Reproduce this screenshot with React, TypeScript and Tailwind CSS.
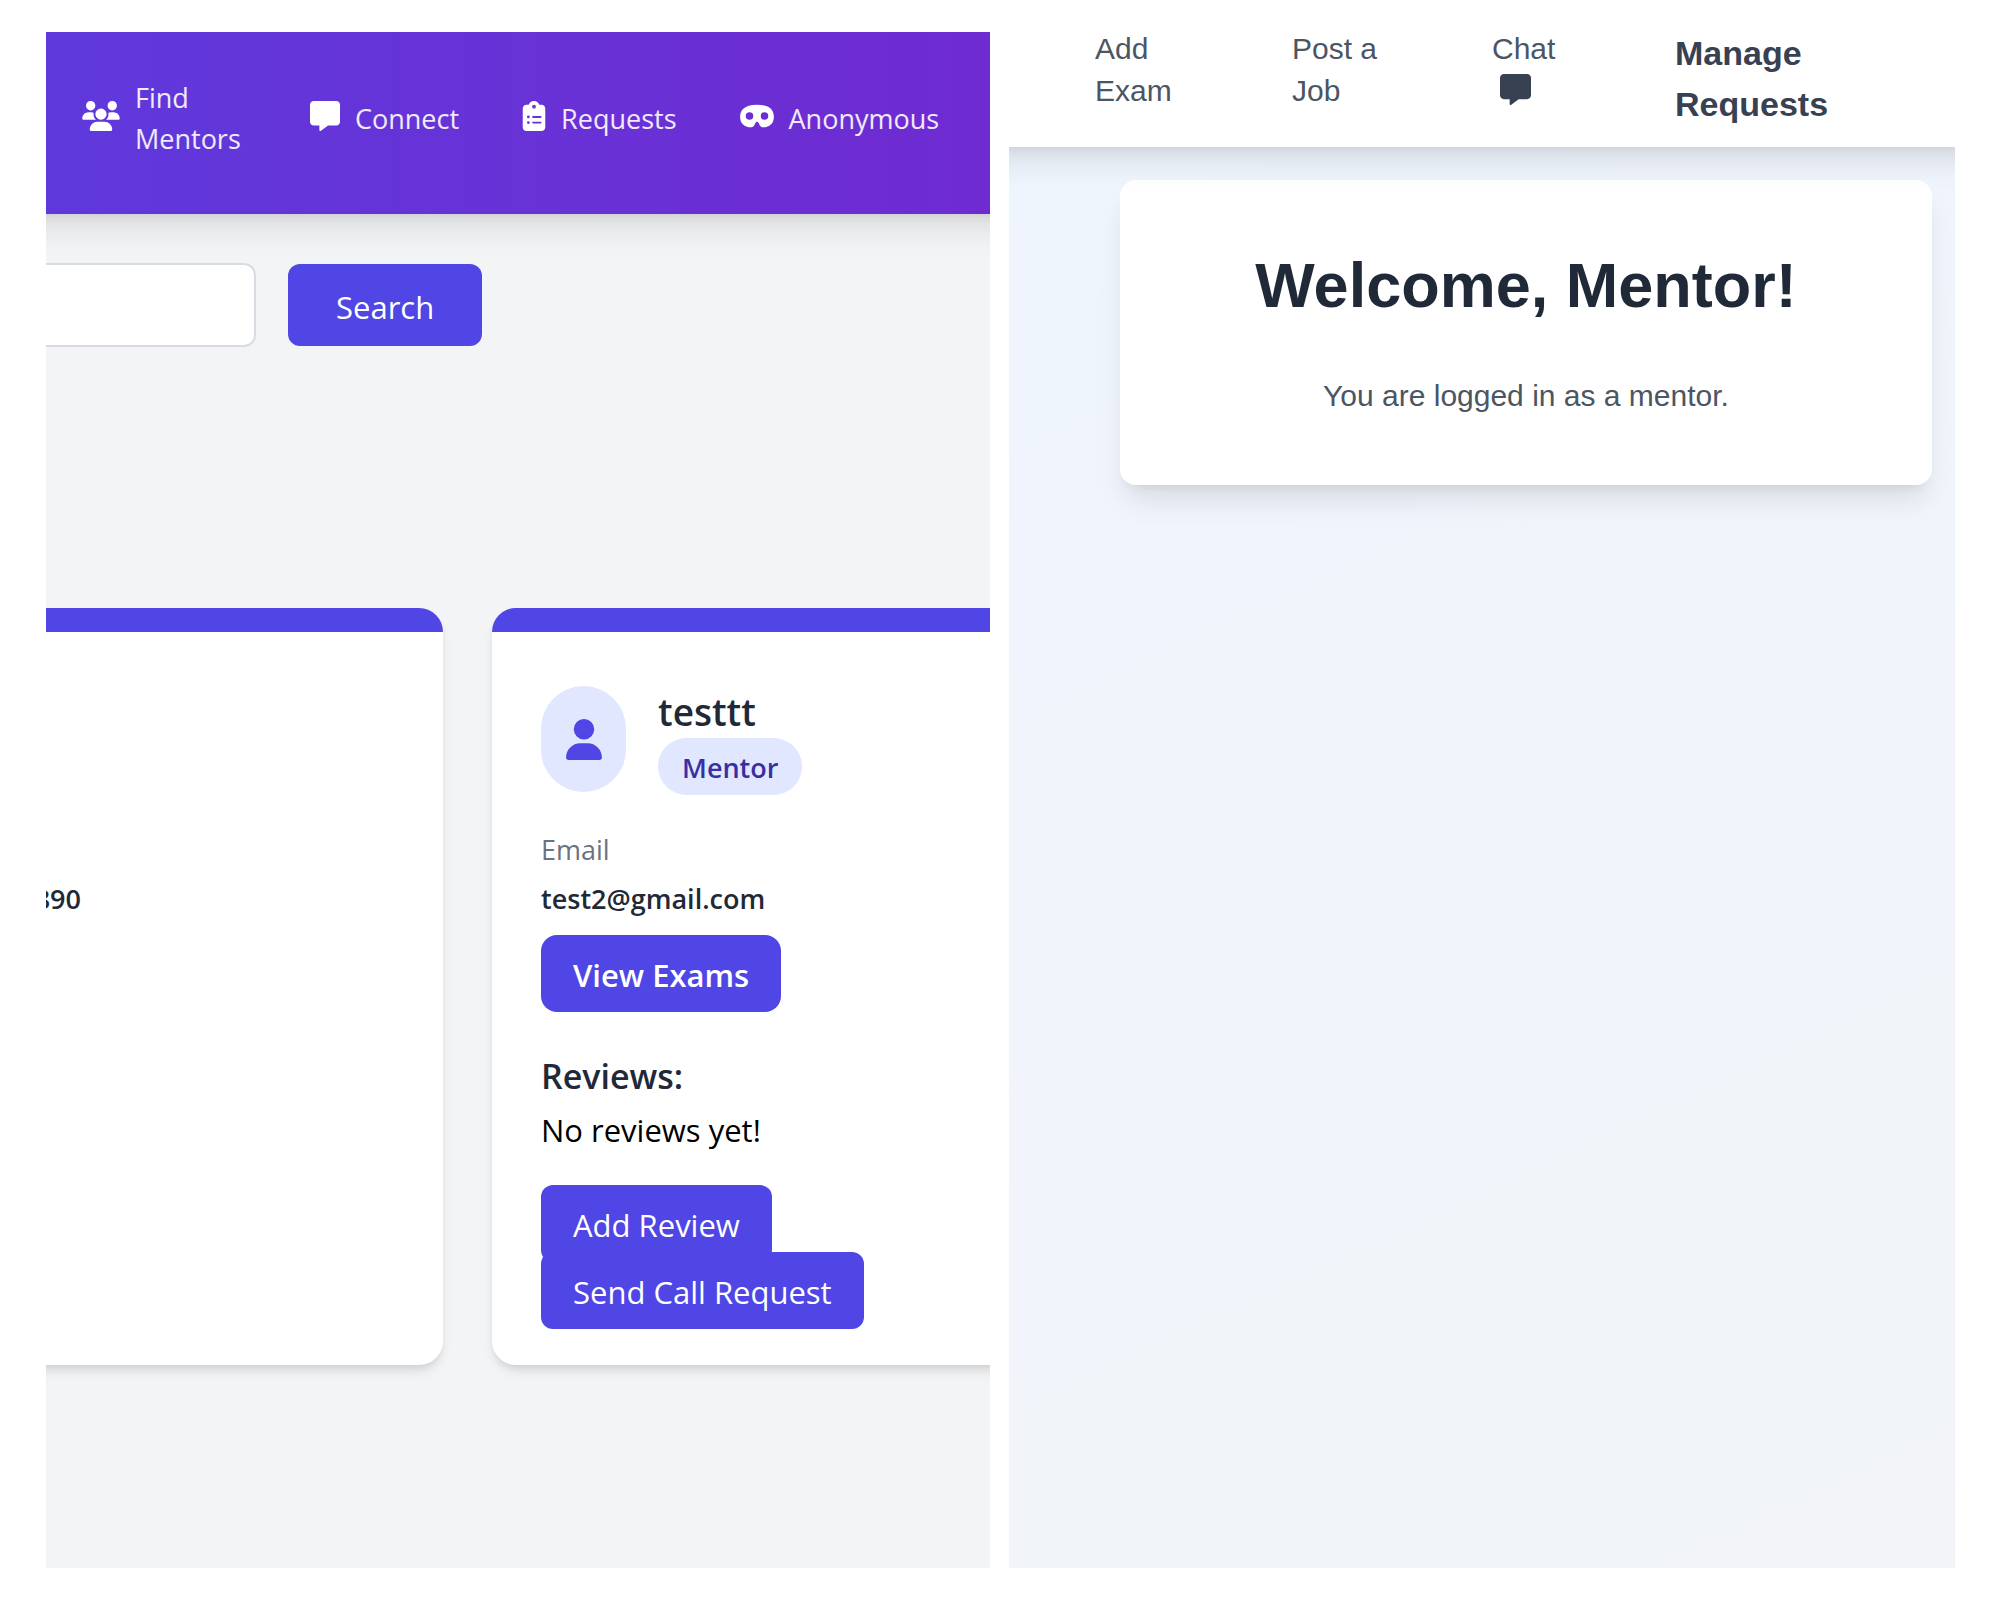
import React, { useState } from 'react';
import { FaClipboardList, FaMask, FaMessage, FaUser, FaUsers } from 'react-icons/fa6';

const navLinks = [
  { label: 'Find Mentors', icon: FaUsers, iconClass: 'w-[38px]', textClass: 'w-28' },
  { label: 'Connect', icon: FaMessage, iconClass: 'w-[30px]', textClass: '' },
  { label: 'Requests', icon: FaClipboardList, iconClass: 'w-6', textClass: '' },
  { label: 'Anonymous', icon: FaMask, iconClass: 'w-[34px]', textClass: '' },
];

const StudentHeader = () => (
  <header className="relative z-10 -mx-10 flex h-[182px] items-center bg-linear-to-r from-[#5e39dc] to-[#6f2ad1] pb-2.5 pl-[76px] shadow-[0_20px_30px_-6px_rgba(0,0,0,0.1),0_8px_12px_-8px_rgba(0,0,0,0.1)]">
    <nav className="flex items-center gap-[63px] text-[27px] leading-[41px] text-white/90">
      {navLinks.map(({ label, icon: Icon, iconClass, textClass }) => (
        <a key={label} href="#" className="flex items-center gap-[15px]">
          <span className="mb-1">
            <Icon className={`h-[30px] text-white ${iconClass}`} />
          </span>
          <span className={textClass}>{label}</span>
        </a>
      ))}
    </nav>
  </header>
);

const MentorSearch = () => {
  const [query, setQuery] = useState('');

  return (
    <form className="flex items-center gap-8" onSubmit={(e) => e.preventDefault()}>
      <input
        type="text"
        aria-label="Search mentors"
        value={query}
        onChange={(e) => setQuery(e.target.value)}
        className="h-[84px] w-[210px] rounded-r-xl border-2 border-l-0 border-[#d9dbe2] bg-white px-8 text-[31px]"
      />
      <button type="submit" className="h-[82px] rounded-xl bg-[#4f46e5] px-12 pt-1 text-[31px] text-white">
        Search
      </button>
    </form>
  );
};

const MentorCard = () => (
  <article className="rounded-l-3xl border-t-24 border-[#4f46e5] bg-white pt-[54px] pb-9 pl-[49px] shadow-[0_8px_12px_-2px_rgba(0,0,0,0.1),0_4px_8px_-4px_rgba(0,0,0,0.1)]">
    <div className="flex gap-8">
      <div className="flex h-[106px] w-[85px] items-center justify-center rounded-full bg-[#e0e7ff]">
        <FaUser className="h-[41px] w-9 text-[#4f46e5]" />
      </div>
      <div>
        <h2 className="text-[37px] leading-[52px] font-semibold text-[#1f2937]">testtt</h2>
        <span className="block w-fit rounded-full bg-[#e0e7ff] px-6 pt-[9px] pb-[7px] text-[27px] leading-[41px] font-semibold text-[#3730a3]">
          Mentor
        </span>
      </div>
    </div>
    <p className="mt-[34px] text-[27px] leading-[41px] text-[#6b7280]">Email</p>
    <p className="mt-2 text-[27px] leading-[41px] font-semibold text-[#1f2937]">test2@gmail.com</p>
    <button type="button" className="mt-4 h-[77px] rounded-2xl bg-[#4f46e5] px-8 pt-1 text-[31px] font-semibold text-white">
      View Exams
    </button>
    <h3 className="mt-10 text-[34px] leading-[49px] font-semibold text-[#1f2937]">Reviews:</h3>
    <p className="mt-[5px] text-[31px] leading-[49px] text-black">No reviews yet!</p>
    <div className="mt-[30px] flex flex-col items-start">
      <button type="button" className="h-[77px] rounded-xl bg-[#4f46e5] px-8 pt-1 text-[31px] text-white">
        Add Review
      </button>
      <button type="button" className="-mt-2.5 h-[77px] rounded-xl bg-[#4f46e5] px-8 pt-1 text-[31px] text-white">
        Send Call Request
      </button>
    </div>
  </article>
);

const StudentView = () => (
  <section className="mt-8 flex min-w-0 flex-[944] flex-col overflow-hidden bg-[#f3f4f6] font-['Open_Sans',sans-serif]">
    <StudentHeader />
    <main className="pt-[49px]">
      <MentorSearch />
      <div className="-mx-6 mt-[261px] grid grid-cols-[421fr_522fr] gap-[49px]">
        <article className="rounded-r-3xl border-t-24 border-[#4f46e5] bg-white pt-[246px] pl-6 shadow-[0_8px_12px_-2px_rgba(0,0,0,0.1),0_4px_8px_-4px_rgba(0,0,0,0.1)]">
          <p className="flex w-[35px] justify-end overflow-hidden text-[27px] leading-[41px] font-semibold text-[#1f2937]">
            890
          </p>
        </article>
        <MentorCard />
      </div>
    </main>
  </section>
);

const MentorView = () => (
  <section className="flex min-w-0 flex-[946] flex-col overflow-hidden bg-linear-[155deg] from-[#eff5fe] to-[#f2f4f8] font-['Liberation_Sans',Arial,sans-serif]">
    <header className="relative z-10 -mx-10 bg-white pt-7 pb-[17px] pl-[126px] shadow-[0_20px_30px_-6px_rgba(0,0,0,0.1),0_8px_12px_-8px_rgba(0,0,0,0.1)]">
      <nav className="flex items-start text-[30px] leading-[42px] text-[#4b5563]">
        <a href="#" className="mr-[85px] w-28">
          Add Exam
        </a>
        <a href="#" className="mr-[88px] w-28">
          Post a Job
        </a>
        <a href="#" className="mr-[71px] w-28">
          Chat
          <FaMessage className="mt-1 ml-2 size-[31px] text-[#374151]" />
        </a>
        <a href="#" className="w-44 text-[34px] leading-[51px] font-bold text-[#374151]">
          Manage Requests
        </a>
      </nav>
    </header>
    <main className="pt-[33px] pr-[23px] pl-[111px]">
      <div className="rounded-2xl bg-white py-[65px] text-center shadow-[0_20px_30px_-6px_rgba(0,0,0,0.1),0_8px_12px_-8px_rgba(0,0,0,0.1)]">
        <h1 className="text-[63px] leading-[80px] font-bold text-[#1f2937]">Welcome, Mentor!</h1>
        <p className="mt-[46px] text-[30px] leading-[49px] text-[#4b5563]">You are logged in as a mentor.</p>
      </div>
    </main>
  </section>
);

const App = () => {
  return (
    <div className="flex min-h-screen gap-[19px] bg-white pr-[45px] pb-8 pl-[46px]">
      <StudentView />
      <MentorView />
    </div>
  );
};

export default App;
